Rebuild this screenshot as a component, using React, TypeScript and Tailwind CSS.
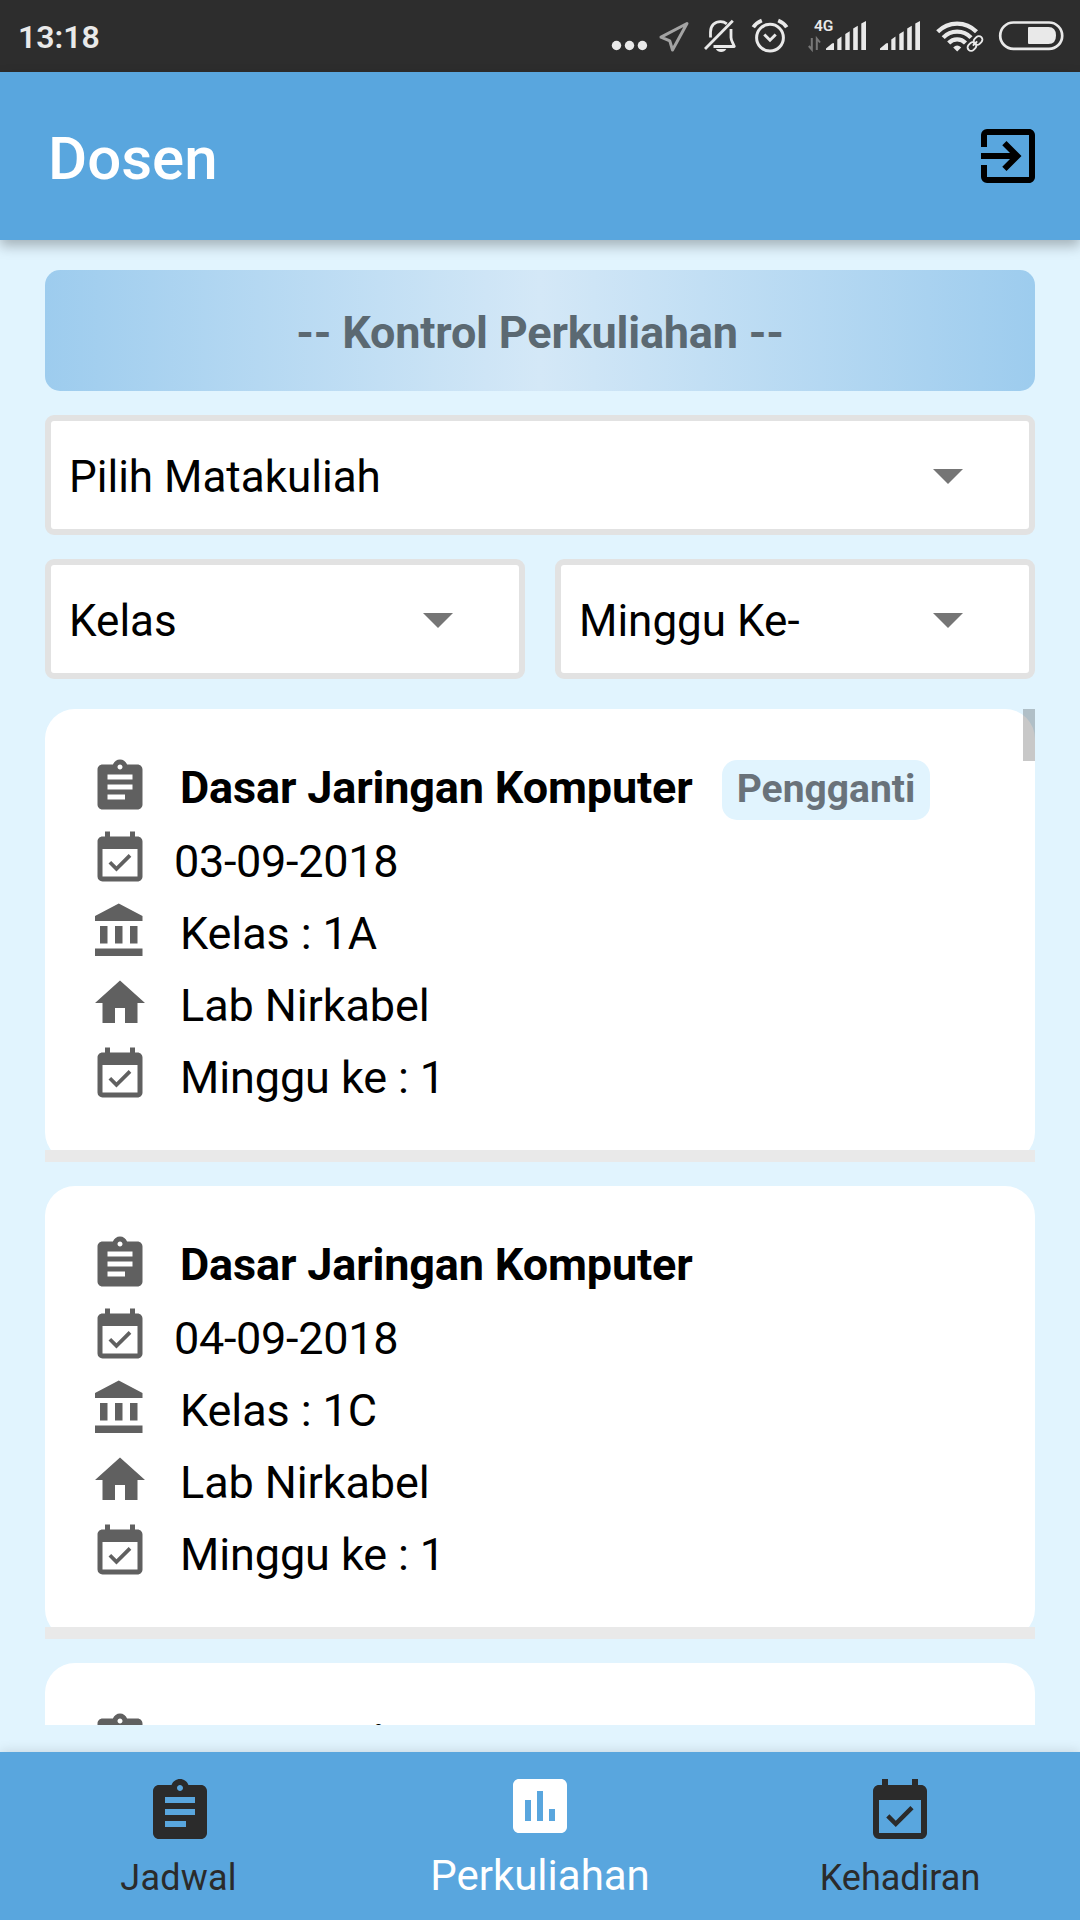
import type { ReactNode } from "react";
import {
  MdAssignment,
  MdArrowDropDown,
  MdAssessment,
  MdEventAvailable,
  MdExitToApp,
} from "react-icons/md";

function StatusIcons() {
  return (
    <div className="flex h-[72px]">
      <svg className="h-[72px] w-[45px]" viewBox="605 0 45 72" fill="#e9e9e9">
        <circle cx="616.5" cy="45.5" r="4.7" />
        <circle cx="629.5" cy="45.5" r="4.7" />
        <circle cx="642.4" cy="45.5" r="4.7" />
      </svg>
      <svg className="h-[72px] w-[50px]" viewBox="650 0 50 72" fill="none" stroke="#a3a3a3" strokeWidth="3" strokeLinejoin="round">
        <path d="M687 23.5 661 37.2 669.8 40.8 672.5 50Z" />
      </svg>
      <svg className="h-[72px] w-[46px]" viewBox="700 0 46 72" fill="none" stroke="#e9e9e9" strokeWidth="2.8">
        <path d="M710.5 37.5V32C710.5 25.500 715 21.600 720.500 21.600C723 21.600 725 22.400 726.800 23.800" />
        <path d="M731 29V37.500C731 40.500 733 43 734.300 46.500H713.500" strokeLinejoin="round" />
        <path d="M732.800 20.800 705 49" />
        <path d="M715.800 49H726.300C724.500 53 717.800 53 715.800 49Z" fill="#e9e9e9" stroke="none" />
      </svg>
      <svg className="h-[72px] w-[54px]" viewBox="746 0 54 72" fill="none" stroke="#e9e9e9" strokeWidth="3">
        <circle cx="770" cy="37.700" r="13.400" />
        <path d="M764.300 34.500 770 40.200 775.700 34.500" />
        <path d="M753.300 27.300Q756 23 761.800 20.600M778.200 20.600Q784 23 786.700 27.300" strokeWidth="3.800" />
      </svg>
      <svg className="h-[72px] w-[74px]" viewBox="800 0 74 72" fill="#e9e9e9">
        <text x="814" y="31" fontFamily="Roboto, sans-serif" fontSize="15.500" fontWeight="600">4G</text>
        <path d="M811.800 38V49.500L808.800 46M816.800 50V38.500L820 42.500" fill="none" stroke="#777" strokeWidth="2" />
        <SignalBars />
      </svg>
      <svg className="h-[72px] w-[56px]" viewBox="820 0 56 72" fill="#e9e9e9">
        <SignalBars />
      </svg>
      <svg className="h-[72px] w-[60px]" viewBox="930 0 60 72" fill="none" stroke="#e9e9e9" strokeWidth="4.200">
        <path d="M937.700 31.800A27 27 0 0 1 976.500 31.800M943.200 37.600A19 19 0 0 1 971 37.600M948.700 43A11.500 11.500 0 0 1 965.500 43" />
        <path d="M953.200 47.500Q957.200 43.500 961.200 47.500L957.200 51.500Z" fill="#e9e9e9" stroke="none" />
        <g transform="rotate(-45 975 43.500)">
          <rect x="964.500" y="38" width="21" height="11" rx="5.500" fill="#2d2d2d" stroke="none" />
          <rect x="966" y="40" width="9.500" height="7" rx="3.500" strokeWidth="1.900" />
          <rect x="974.500" y="40" width="9.500" height="7" rx="3.500" strokeWidth="1.900" />
          <path d="M972 43.500H978" strokeWidth="1.900" />
        </g>
      </svg>
      <svg className="h-[72px] w-[90px]" viewBox="990 0 90 72" fill="none">
        <rect x="1000.200" y="22.500" width="62" height="26.400" rx="13.200" stroke="#e9e9e9" strokeWidth="2.700" />
        <path d="M1029 27H1048.500Q1056 27 1056 35.500Q1056 44 1048.500 44H1029Q1028 44 1028 43V28Q1028 27 1029 27Z" fill="#e9e9e9" />
      </svg>
    </div>
  );
}

function SignalBars() {
  return (
    <path d="M826 50V48.500L832 43.500Q834 42.500 834 44V50ZM837.300 50V39.500L841.500 36.500V50ZM845.300 50V34L849.700 31.300V50ZM853.200 50V28.500L857.800 25.800V50ZM861.300 50V23.500L866 21V50Z" />
  );
}

function HomeIcon() {
  return (
    <svg className="size-[60px]" viewBox="0 0 24 24" fill="currentColor">
      <path d="M10 20v-6h4v6h5v-8h3L12 3 2 12h3v8z" />
    </svg>
  );
}

function BankIcon() {
  return (
    <svg className="size-[60px]" viewBox="0 0 24 24" fill="currentColor">
      <path d="M4 10v7h3v-7H4zm6 0v7h3v-7h-3zM2 22h19v-3H2v3zm14-12v7h3v-7h-3zm-4.500-9L2 6v2h19V6l-9.500-5z" />
    </svg>
  );
}

function Select({ label }: { label: string }) {
  return (
    <div className="flex h-[120px] flex-1 items-center justify-between rounded-[9px] border-[6px] border-[#e2e2e2] bg-white pr-[45px] pl-[18px]">
      <span className="pt-[4px] text-[44px] leading-[60px] text-black">{label}</span>
      <MdArrowDropDown className="size-[72px] text-[#757575]" />
    </div>
  );
}

function Row({ icon, children, date = false }: { icon: ReactNode; children: ReactNode; date?: boolean }) {
  return (
    <div className={date ? "flex h-[72px] items-start gap-[24px] tracking-[-0.3px]" : "flex h-[72px] items-start gap-[30px] tracking-[-0.1px]"}>
      <span className="shrink-0 text-[#606060]">{icon}</span>
      <span className="text-[45px] leading-[65px] text-black">{children}</span>
    </div>
  );
}

interface Lecture {
  title: string;
  date: string;
  kelas: string;
  room: string;
  week: number;
  replacement?: boolean;
}

const lectures: Lecture[] = [
  { title: "Dasar Jaringan Komputer", date: "03-09-2018", kelas: "1A", room: "Lab Nirkabel", week: 1, replacement: true },
  { title: "Dasar Jaringan Komputer", date: "04-09-2018", kelas: "1C", room: "Lab Nirkabel", week: 1 },
  { title: "Dasar Jaringan Komputer", date: "05-09-2018", kelas: "1B", room: "Lab Nirkabel", week: 1 },
];

function LectureCard({ item }: { item: Lecture }) {
  return (
    <article className="relative h-[453px] shrink-0 rounded-[30px] bg-white pt-[48px] pl-[45px]">
      <div className="flex h-[72px] items-start">
        <MdAssignment className="size-[60px] shrink-0 text-[#606060]" />
        <h2 className="ml-[30px] w-[512px] text-[45px] leading-[61px] font-bold tracking-[-0.16px] whitespace-nowrap text-black">
          {item.title}
        </h2>
        {item.replacement && (
          <span className="mt-[3px] ml-[30px] h-[60px] w-[208px] rounded-[15px] bg-[#e1f4fe] text-center text-[39px] leading-[58px] font-bold text-[#69727a]">
            Pengganti
          </span>
        )}
      </div>
      <Row icon={<MdEventAvailable className="size-[60px]" />} date>{item.date}</Row>
      <Row icon={<BankIcon />}>Kelas : {item.kelas}</Row>
      <Row icon={<HomeIcon />}>{item.room}</Row>
      <Row icon={<MdEventAvailable className="size-[60px]" />}>Minggu ke : {item.week}</Row>
      <div className="absolute inset-x-0 bottom-0 h-[12px] bg-[#e9e9e9]" />
    </article>
  );
}

export default function App() {
  return (
    <div className="flex h-[1920px] w-[1080px] flex-col overflow-hidden bg-[#e1f4fe] font-[Roboto,sans-serif]">
      <div className="flex h-[72px] shrink-0 items-center justify-between bg-[#2d2d2d] pl-[18px]">
        <span className="pt-[2px] text-[32px] leading-[40px] font-semibold text-[#e9e9e9]">13:18</span>
        <StatusIcons />
      </div>

      <header className="z-10 flex h-[168px] shrink-0 items-center justify-between bg-[#59a6de] pr-[36px] pl-[48px] shadow-[0_6px_12px_rgba(0,0,0,0.27)]">
        <h1 className="pt-[5px] text-[60px] leading-[70px] font-medium text-white">Dosen</h1>
        <MdExitToApp className="size-[72px] text-black" />
      </header>

      <main className="flex min-h-0 flex-1 flex-col px-[45px] pt-[30px] pb-[27px]">
        <div className="flex h-[121px] shrink-0 items-center justify-center rounded-[15px] bg-[linear-gradient(90deg,#9dccee_0%,#d4e8f7_50%,#9dccee_100%)]">
          <span className="pt-[4px] text-[45px] leading-[60px] font-bold tracking-[-0.2px] text-[#5b6972]">-- Kontrol Perkuliahan --</span>
        </div>
        <div className="mt-[24px] flex shrink-0">
          <Select label="Pilih Matakuliah" />
        </div>
        <div className="mt-[24px] flex shrink-0 gap-[30px]">
          <Select label="Kelas" />
          <Select label="Minggu Ke-" />
        </div>

        <section className="relative mt-[30px] flex min-h-0 flex-1 flex-col gap-[24px] overflow-hidden">
          {lectures.map((item) => (
            <LectureCard key={item.date} item={item} />
          ))}
          <div className="absolute top-0 right-0 h-[52px] w-[12px] bg-black/[0.216]" />
        </section>
      </main>

      <nav className="grid h-[168px] shrink-0 grid-cols-3 bg-[#59a6de] text-[36px] text-[#2b2b2b] shadow-[0_0_12px_rgba(0,0,0,0.14)]">
        <div className="flex flex-col items-center pt-[24px]">
          <MdAssignment className="size-[72px]" />
          <span className="pr-[3px] leading-[60px] tracking-[0.2px]">Jadwal</span>
        </div>
        <div className="flex flex-col items-center pt-[18px] text-white">
          <MdAssessment className="size-[72px]" />
          <span className="text-[42px] leading-[68px]">Perkuliahan</span>
        </div>
        <div className="flex flex-col items-center pt-[24px]">
          <MdEventAvailable className="size-[72px]" />
          <span className="leading-[60px]">Kehadiran</span>
        </div>
      </nav>
    </div>
  );
}
